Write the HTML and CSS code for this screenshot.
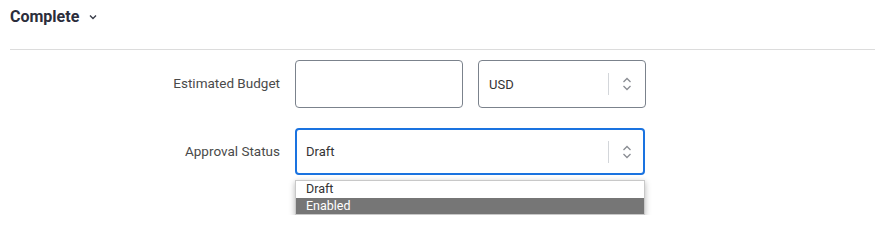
FILE: index.html
```html
<!DOCTYPE html>
<html>
<head>
<meta charset="utf-8">
<link rel="stylesheet" href="styles.css">
</head>
<body>
<div class="page">
  <div class="header">
    <span class="title">Complete</span>
    <svg class="caret" width="8" height="6" viewBox="0 0 8 6"><path d="M1 1.5 L4 4.5 L7 1.5" fill="none" stroke="#3a3d4a" stroke-width="1.4"/></svg>
  </div>
  <div class="rule"></div>
  <div class="form">
    <div class="row">
      <div class="label">Estimated Budget</div>
      <div class="controls">
        <div class="field budget"></div>
        <div class="field select currency">
          <span class="value">USD</span>
          <span class="sep"></span>
          <svg class="updown" width="10" height="14" viewBox="0 0 10 14"><path d="M1.5 5 L5 1.5 L8.5 5 M1.5 9 L5 12.5 L8.5 9" fill="none" stroke="#8a8d93" stroke-width="1.3"/></svg>
        </div>
      </div>
    </div>
    <div class="row row2">
      <div class="label">Approval Status</div>
      <div class="controls col">
        <div class="field select status focus">
          <span class="value">Draft</span>
          <span class="sep"></span>
          <svg class="updown" width="10" height="14" viewBox="0 0 10 14"><path d="M1.5 5 L5 1.5 L8.5 5 M1.5 9 L5 12.5 L8.5 9" fill="none" stroke="#8a8d93" stroke-width="1.3"/></svg>
        </div>
        <div class="menu">
          <div class="opt">Draft</div>
          <div class="opt sel">Enabled</div>
        </div>
      </div>
    </div>
  </div>
</div>
</body>
</html>
```
FILE: styles.css
```css
html, body { margin: 0; padding: 0; background: #fff; }
body { font-family: Roboto, "Noto Sans", Arial, sans-serif; }
.page { padding: 0 19px 0 10px; }
.header { height: 32px; display: flex; align-items: center; gap: 10px; }
.title { font-size: 16px; font-weight: 700; color: #2b2d3b; }
.caret { margin-top: 1px; }
.rule { margin-top: 17px; height: 1px; background: #dcdcdc; }
.form { padding-top: 10px; }
.row { display: flex; align-items: flex-start; }
.row2 { margin-top: 20px; }
.label { width: 270px; text-align: right; font-size: 13.5px; color: #4a4a4a; padding-right: 15px; line-height: 47px; }
.controls { display: flex; gap: 15px; }
.controls.col { flex-direction: column; gap: 5px; }
.field { box-sizing: border-box; height: 48px; border: 1px solid #7b828c; border-radius: 4px; background: #fff; }
.budget { width: 168px; }
.currency { width: 168px; }
.select { display: flex; align-items: center; padding-left: 10px; padding-right: 13px; }
.value { flex: 1; font-size: 13px; color: #333; }
.sep { width: 1px; height: 22px; background: #d3d6da; margin-right: 13px; }
.status { width: 350px; height: 47px; border: 2px solid #1a73e0; padding-left: 9px; padding-right: 11px; }
.menu { width: 350px; box-sizing: border-box; border: 1px solid #c8c8c8; background: #fff; box-shadow: 0 2px 6px rgba(0,0,0,0.3); }
.opt { font-size: 12.5px; line-height: 16.5px; padding-left: 10px; color: #333; }
.opt.sel { background: #767676; color: #fff; }
```
